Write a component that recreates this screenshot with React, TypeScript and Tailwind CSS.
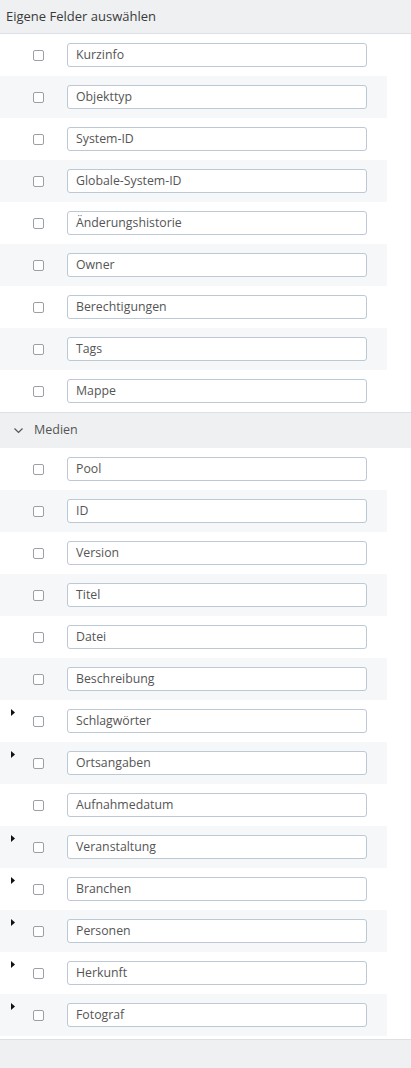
import React from 'react';

type Field = { label: string; expandable?: boolean };

const ownFields: Field[] = [
  { label: 'Kurzinfo' },
  { label: 'Objekttyp' },
  { label: 'System-ID' },
  { label: 'Globale-System-ID' },
  { label: 'Änderungshistorie' },
  { label: 'Owner' },
  { label: 'Berechtigungen' },
  { label: 'Tags' },
  { label: 'Mappe' },
];

const mediaFields: Field[] = [
  { label: 'Pool' },
  { label: 'ID' },
  { label: 'Version' },
  { label: 'Titel' },
  { label: 'Datei' },
  { label: 'Beschreibung' },
  { label: 'Schlagwörter', expandable: true },
  { label: 'Ortsangaben', expandable: true },
  { label: 'Aufnahmedatum' },
  { label: 'Veranstaltung', expandable: true },
  { label: 'Branchen', expandable: true },
  { label: 'Personen', expandable: true },
  { label: 'Herkunft', expandable: true },
  { label: 'Fotograf', expandable: true },
];

function FieldRow({ field, striped }: { field: Field; striped: boolean }) {
  return (
    <div className={`relative flex h-[42px] w-[387px] items-center ${striped ? 'bg-[#f6f7f9]' : 'bg-white'}`}>
      {field.expandable && (
        <svg className="absolute left-[11px] top-[9px]" width="4" height="7" viewBox="0 0 4 7">
          <path d="M0 0 L4 3.5 L0 7 Z" fill="#111" />
        </svg>
      )}
      <div className="ml-[33px] h-[11px] w-[11px] rounded-[2px] border border-[#9aa0a6] bg-white" />
      <div className="ml-[23px] flex h-[24px] w-[300px] items-center rounded-[3px] border border-[#bcc8d4] bg-white pl-[8px] text-[12.3px] text-[#555]">
        {field.label}
      </div>
    </div>
  );
}

export default function App() {
  return (
    <div className="flex h-[1068px] w-[411px] flex-col bg-white font-['Open_Sans',sans-serif]">
      <div className="flex h-[34px] items-center border-b border-[#dde1e6] bg-[#eef0f2] pl-[6px] text-[13px] text-[#3a3a3a]">
        Eigene Felder auswählen
      </div>
      {ownFields.map((f, i) => (
        <FieldRow key={f.label} field={f} striped={i % 2 === 1} />
      ))}
      <div className="flex h-[36px] items-center border-t border-[#dde1e6] bg-[#eef0f2] text-[12.5px] text-[#555]">
        <svg className="ml-[14px]" width="9" height="6" viewBox="0 0 9 6">
          <path d="M0.5 0.5 L4.5 4.5 L8.5 0.5" fill="none" stroke="#555" strokeWidth="1.2" />
        </svg>
        <span className="ml-[11px]">Medien</span>
      </div>
      {mediaFields.map((f, i) => (
        <FieldRow key={f.label} field={f} striped={i % 2 === 1} />
      ))}
      <div className="mt-[3px] flex-1 border-t border-[#dde1e6] bg-[#eef0f2]" />
    </div>
  );
}
